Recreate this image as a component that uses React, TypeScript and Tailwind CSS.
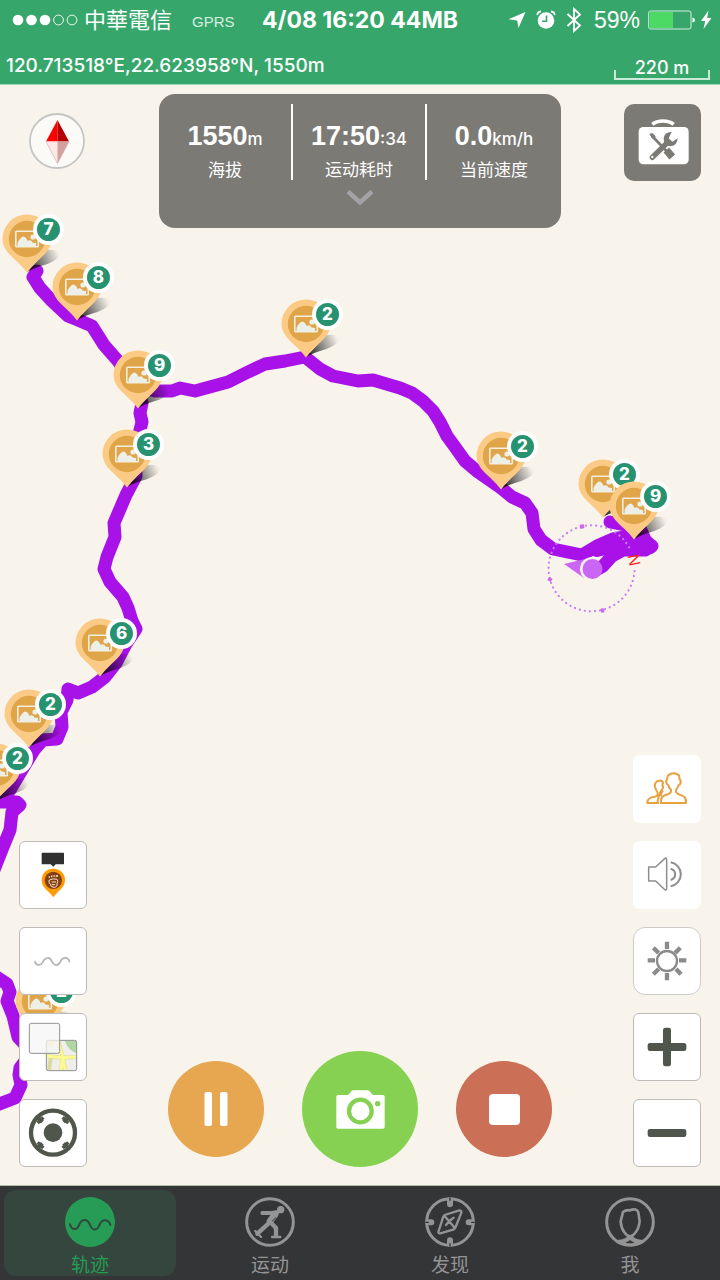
import React from 'react';

const sans = "font-['Liberation_Sans','Noto_Sans_CJK_SC',sans-serif]";
const inter = "font-['Inter','Noto_Sans_CJK_SC',sans-serif]";

type Pin = { x: number; y: number; count: number };

/* x / y is the tip of each pin on the map canvas */
const pins: Pin[] = [
  { x: 27, y: 187, count: 7 },
  { x: 77, y: 235, count: 8 },
  { x: 138, y: 323, count: 9 },
  { x: 306, y: 272, count: 2 },
  { x: 127, y: 402, count: 3 },
  { x: 501, y: 404, count: 2 },
  { x: 603, y: 432, count: 2 },
  { x: 634, y: 454, count: 9 },
  { x: 100, y: 591, count: 6 },
  { x: 29, y: 662, count: 2 },
  { x: -4, y: 716, count: 2 },
  { x: 40, y: 949, count: 2 },
];

function PhotoPin({ pin }: { pin: Pin }) {
  return (
    <button
      type="button"
      aria-label={`${pin.count} 张照片`}
      className="absolute h-[60px] w-[66px]"
      style={{ left: pin.x - 26, top: pin.y - 59 }}
    >
      <svg viewBox="0 0 66 60" className="h-[60px] w-[66px]" fill="none">
        <path d="M26 59L46 37Q60 36 59 42.500Q55 49 40 53Q31 56 26 59Z" fill="url(#pinShadow)" />
        <path
          d="M26 1.500A24.500 24.500 0 0 1 50.500 26C50.500 36 42 43 36 48.500Q30 54 26 59.500Q22 54 16 48.500C10 43 1.500 36 1.500 26A24.500 24.500 0 0 1 26 1.500Z"
          fill="#fbcb85"
        />
        <circle cx="26" cy="26" r="18.200" fill="#e0a449" />
        <rect x="14.800" y="18.300" width="22.500" height="15.400" rx="0.800" stroke="#f3efdf" strokeWidth="1.600" />
        <path d="M16.500 33V30Q18.500 25 22 23.500Q25 23.500 26.500 28Q29.500 26 31.500 29.500L35 30V33Z" fill="#edf0e9" />
        <circle cx="32" cy="24" r="2.600" fill="#edf0e9" />
      </svg>
      <span
        className={`absolute top-[1px] right-[3px] flex size-[31px] items-center justify-center rounded-full border-4 border-white bg-[#27926f] text-[17px] leading-none font-extrabold text-white ${inter}`}
      >
        {pin.count}
      </span>
    </button>
  );
}

function TrackMap() {
  return (
    <div className="absolute inset-0 overflow-hidden">
      <svg viewBox="0 85 720 1101" className="absolute top-0 left-0 h-[1101px] w-[720px]" fill="none" role="img" aria-label="轨迹地图">
        <defs>
          <linearGradient id="pinShadow" x1="28" y1="56" x2="58" y2="43" gradientUnits="userSpaceOnUse">
            <stop stopColor="#000" stopOpacity="0.85" />
            <stop offset="0.4" stopColor="#000" stopOpacity="0.5" />
            <stop offset="1" stopColor="#000" stopOpacity="0.02" />
          </linearGradient>
        </defs>
        <g stroke="#a812e8" strokeWidth="13" strokeLinecap="round" strokeLinejoin="round">
          <path d="M37 271L33 277L40 288L52 301L68 316L78 320L92 326L104 345L118 361L137 386L155 391L172 391L180 388L195 391L228 382L246 373L265 364L285 361L305 357L320 369L333 376L358 381L373 380L400 388L412 393L423 401L433 411L440 422L447 436L455 447L465 461L478 472L501 488L512 497L525 503L532 513L534 529L541 540L553 549L582 555L597 546L613 539L630 536L647 542L652 546L645 550L623 550L612 556L603 566L594 571" />
          <path d="M610 522L640 528L646 542" />
          <path d="M597 550L625 543L650 547" strokeWidth="14" />
          <path d="M137 386L142 403L140 413L142 422L139 434L136 455L136 476L126 495L114 523L115 537L107 557L104 569L110 582L123 597L128 608L132 621L136 629L126 644L116 663L105 677L92 687L78 693L68 689L67 700L61 712L62 727L57 739L43 740L34 750L20 773L10 790L0 802L17 802L20 805L12 812L10 830L3 847L-6 870" />
          <path d="M-8 974L7 984L10 992L7 1001L13 1016L18 1037L32 1052L20 1068L19 1075L21 1085L15 1098L-6 1106" />
        </g>
        <path d="M634.500 571A43 43 0 1 1 630 549" stroke="#c77df2" strokeWidth="2.200" strokeDasharray="0.100 5" strokeLinecap="round" />
        <path d="M580 527L584 526M549 581L551 578M601 611L604 610" stroke="#cf63f3" strokeWidth="4" />
        <path d="M564 564L585 559L584 578Z" fill="#cb65f5" />
        <circle cx="592" cy="569" r="12" fill="#f8f4ec" clipPath="inset(0 12px 0 0)" />
        <circle cx="592.500" cy="569" r="10" fill="#cb65f5" />
        <text x="634" y="560" transform="rotate(78 634 560)" textAnchor="middle" dominantBaseline="central" fill="#fb1d1d" fontSize="16" fontFamily="Liberation Sans, sans-serif">N</text>
      </svg>
      {pins.map((p) => (
        <PhotoPin key={`${p.x}-${p.y}`} pin={p} />
      ))}
    </div>
  );
}

function StatusBar() {
  return (
    <header className={`h-[85px] border-b border-[#9cd5b5] bg-[#37a66b] text-white ${sans}`}>
      <div className="grid h-10 grid-cols-[1fr_auto_1fr] items-center">
        <div className="flex items-center pl-3">
          <svg viewBox="0 0 66 12" className="h-3 w-[66px]" aria-label="信号">
            <g fill="#fff">
              <circle cx="6" cy="6" r="5.300" />
              <circle cx="19.500" cy="6" r="5.300" />
              <circle cx="33" cy="6" r="5.300" />
            </g>
            <g fill="none" stroke="#fff" strokeWidth="0.900">
              <circle cx="46.500" cy="6" r="4.900" />
              <circle cx="60" cy="6" r="4.900" />
            </g>
          </svg>
          <span className="mb-1 ml-1.5 font-['Noto_Sans_CJK_TC',sans-serif] text-[22px] leading-7">中華電信</span>
          <span className="mt-1 ml-5 text-[15px] text-[#d8efe2]">GPRS</span>
        </div>
        <div className={`text-[23px] leading-8 font-bold ${inter}`}>4/08 16:20 44MB</div>
        <div className="flex items-center justify-end pr-2">
          <svg viewBox="0 0 18 18" className="mr-2.5 size-[18px]" fill="#fff">
            <path d="M17.500 1L10.500 17L9.200 9.600L0.500 8.300Z" />
          </svg>
          <svg viewBox="0 0 20 20" className="mr-2.5 size-5">
            <circle cx="10" cy="10.500" r="8.300" fill="#fff" />
            <path d="M1.500 5Q1 2 5 1.500M18.500 5Q19 2 15 1.500" stroke="#fff" strokeWidth="1.800" fill="none" />
            <path d="M10.500 5.500V11.300H6" stroke="#37a66b" strokeWidth="1.600" fill="none" />
          </svg>
          <svg viewBox="0 0 16 26" className="mr-3 h-[26px] w-4" fill="none" stroke="#fff" strokeWidth="1.800">
            <path d="M1.500 7L14 18.500L8 24V2L14 7.500L1.500 19" />
          </svg>
          <span className="text-[23px] leading-8">59%</span>
          <svg viewBox="0 0 48 20" className="ml-2 h-5 w-12">
            <rect x="0.700" y="1" width="42.300" height="18" rx="2" fill="none" stroke="#d5eedf" strokeWidth="1" />
            <rect x="1.500" y="2" width="23.500" height="16" fill="#4cd964" />
            <path d="M44.500 7.500Q47 8 47 10Q47 12 44.500 12.500Z" fill="#fff" />
          </svg>
          <svg viewBox="0 0 12 20" className="ml-1 h-5 w-3" fill="#fff">
            <path d="M8.500 0.500L1 11H5.200L3.500 19L11.500 8H7.200Z" />
          </svg>
        </div>
      </div>
      <div className="flex items-start justify-between pr-2.5 pl-1.5">
        <p className={`mt-3 text-[19px] leading-7 font-medium ${inter}`}>120.713518°E,22.623958°N, 1550m</p>
        <div className="relative mt-4 w-24">
          <p className={`text-center text-[18px] leading-6 font-medium ${inter}`}>220 m</p>
          <div className="absolute bottom-0 h-2.5 w-full border-x-2 border-b-2 border-[#c8ead7]" />
        </div>
      </div>
    </header>
  );
}

const stats = [
  { value: '1550', unit: 'm', label: '海拔' },
  { value: '17:50', unit: ':34', label: '运动耗时' },
  { value: '0.0', unit: 'km/h', label: '当前速度' },
];

function StatsPanel() {
  return (
    <section className={`h-[134px] rounded-2xl bg-[#7b7a75] pt-2.5 text-white ${sans}`}>
      <dl className="grid grid-cols-3 divide-x-2 divide-white">
        {stats.map((s) => (
          <div key={s.label} className="flex h-[76px] flex-col-reverse items-center justify-end pt-4">
            <dt className="text-[17px] leading-7">{s.label}</dt>
            <dd className="mb-0.5 text-[27px] leading-8 font-bold">
              {s.value}
              <span className={`text-[17px] font-medium ${inter}`}>{s.unit}</span>
            </dd>
          </div>
        ))}
      </dl>
      <button type="button" aria-label="展开" className="mx-auto mt-2.5 block">
        <svg viewBox="0 0 28 16" className="h-4 w-7" fill="none" stroke="#a3a3a5" strokeWidth="4.500">
          <path d="M2 1.500L14 12.500L26 1.500" />
        </svg>
      </button>
    </section>
  );
}

type ToolProps = { label: string; frame: string; box: string; children: React.ReactNode };

function Tool({ label, frame, box, children }: ToolProps) {
  return (
    <button type="button" aria-label={label} className={`size-[68px] border bg-white ${frame}`}>
      <svg viewBox={box} className="size-full" fill="none">
        {children}
      </svg>
    </button>
  );
}

const framed = 'rounded-md border-[#bdbcb8]';
const plain = 'rounded-md border-white';

function LeftTools() {
  return (
    <div className="flex flex-col gap-[18px]">
      <Tool label="标记" frame={framed} box="60 154 198 198">
        <path d="M127 186H190Q192 186 192 188V219Q192 221 190 221H167L160 228L152 221H127Q125 221 125 219V188Q125 186 127 186Z" fill="#303030" />
        <path d="M160 234A34 34 0 0 1 195 269C195 293 171 302 160 320C149 302 125 293 125 269A34 34 0 0 1 160 234Z" fill="#ff9c05" />
        <circle cx="160" cy="269" r="26" fill="#84400f" />
        <path d="M148 268Q160 262 171 266Q176 272 171 279Q173 289 162 290Q152 290 151 281Q144 275 148 268ZM155 274H168M155 282H165" stroke="#f6e9de" strokeWidth="3" />
        <path d="M146 259H150M153 257H157M160 256H164M167 256H174" stroke="#f6e9de" strokeWidth="5" />
      </Tool>
      <Tool label="轨迹线" frame={framed} box="60 413 198 198">
        <path d="M105 514C108 525 121 528 128 516C134 502 149 496 156 514C164 528 175 528 181 514C189 498 205 500 208 514" stroke="#b4b4b4" strokeWidth="5" strokeLinecap="round" />
      </Tool>
      <Tool label="图层" frame={framed} box="60 672 198 198">
        <rect x="139" y="751" width="91" height="91" rx="6" fill="#efeeea" />
        <path d="M139 753H172L159 767L139 771Z" fill="#f7dfa7" />
        <path d="M194 752H229V788Q208 785 194 752Z" fill="#afd6a4" />
        <path d="M141 798Q182 805 228 801M174 753L188 801L183 840M188 801L196 840M147 840L153 800" stroke="#dadb9a" strokeWidth="12" />
        <path d="M141 798Q182 805 228 801M174 753L188 801L183 840M188 801L196 840" stroke="#fcf991" strokeWidth="9" />
        <rect x="139" y="751" width="91" height="91" rx="6" stroke="#8e8e8e" strokeWidth="3" />
        <rect x="88" y="700" width="91" height="90" rx="6" fill="#f5f5f5" fillOpacity="0.75" stroke="#929292" strokeWidth="3" />
      </Tool>
      <Tool label="定位" frame={framed} box="60 931 198 198">
        <circle cx="159" cy="1029" r="66" stroke="#50564c" strokeWidth="13" />
        <circle cx="159" cy="1029" r="28" fill="#50564c" />
        <g stroke="#50564c">
          <path d="M111 981L127 997M207 981L191 997M111 1077L127 1061M207 1077L191 1061" strokeWidth="12" />
          <path d="M113 1000L130 983M205 1000L188 983M113 1058L130 1075M205 1058L188 1075" strokeWidth="10" />
        </g>
      </Tool>
    </div>
  );
}

function RightTools() {
  return (
    <div className="flex flex-col gap-[18px]">
      <Tool label="队友" frame={plain} box="73 45 198 198">
        <g stroke="#e9a03f" strokeWidth="6" strokeLinejoin="round">
          <path d="M154 186H229Q231 166 212 162Q198 157 199 149Q198 145 204 139Q206 131 211 130Q216 119 210 115L208 103Q192 91 175 103L172 115Q167 120 172 129L176 133Q179 142 184 146Q186 156 174 160Q151 165 154 186Z" />
          <path d="M148 186H113Q112 174 126 169Q145 166 144 160Q145 153 140 148Q136 139 135 134Q138 119 148 119Q158 118 160 125L158 134Q163 136 157 146L151 155Q150 162 157 164M160 149L147 166L143 185" />
        </g>
      </Tool>
      <Tool label="声音" frame={plain} box="73 305 198 198">
        <g stroke="#8e8e8e" strokeWidth="4.500" strokeLinejoin="round">
          <path d="M117 380H138L165 355Q170 350 171 359V444Q170 452 164 447L138 422H117Z" />
          <path d="M183 385A17.500 17.500 0 0 1 183 419M183 366A36.500 36.500 0 0 1 183 438" strokeWidth="6" />
        </g>
      </Tool>
      <Tool label="亮度" frame="rounded-xl border-[#cdccc8]" box="73 563 198 198">
        <circle cx="172" cy="662" r="30" stroke="#8b8b8b" strokeWidth="7" />
        <path d="M172 604V626M172 698V720M114 660H136M208 660H230M131 622L147 638M212 622L196 638M131 702L147 686M214 702L199 686" stroke="#8b8b8b" strokeWidth="13" />
      </Tool>
      <Tool label="放大" frame={framed} box="73 821 198 198">
        <g fill="#50564c">
          <rect x="160" y="862" width="24" height="116" rx="7" />
          <rect x="114" y="908" width="116" height="24" rx="7" />
        </g>
      </Tool>
      <Tool label="缩小" frame={framed} box="73 1080 198 198">
        <rect x="114" y="1167" width="116" height="24" rx="7" fill="#50564c" />
      </Tool>
    </div>
  );
}

function RecordControls() {
  return (
    <div className="flex items-center gap-[38px]">
      <button type="button" aria-label="暂停" className="flex size-24 items-center justify-center rounded-full bg-[#e6a750]">
        <svg viewBox="0 0 24 34" className="h-[34px] w-6" fill="#fff">
          <rect x="0.500" width="7.500" height="34" rx="2" />
          <rect x="16" width="7.500" height="34" rx="2" />
        </svg>
      </button>
      <button type="button" aria-label="拍照" className="flex size-[116px] items-center justify-center rounded-full bg-[#86d151]">
        <svg viewBox="555 149 147 117" className="h-[39px] w-[49px]">
          <path d="M561 164H590Q597 160 600 154Q603 150 608 150H650Q655 150 658 155Q661 161 667 164H696Q701 164 701 169V260Q701 265 696 265H561Q556 265 556 260V169Q556 164 561 164Z" fill="#fff" />
          <circle cx="628" cy="212" r="34" fill="#fff" stroke="#86d151" strokeWidth="13" />
          <circle cx="680" cy="190" r="8" fill="#86d151" />
        </svg>
      </button>
      <button type="button" aria-label="停止" className="flex size-24 items-center justify-center rounded-full bg-[#cb7056]">
        <span className="size-[31px] rounded bg-white" />
      </button>
    </div>
  );
}

const tabs = [
  {
    label: '轨迹',
    box: '195 51 150 150',
    icon: (
      <>
        <circle cx="270" cy="126" r="75" fill="#279c56" />
        <path d="M210 133C213 148 228 153 236 138C243 117 260 113 269 132C276 153 291 154 299 134C307 114 327 119 331 135" stroke="#2f4a3b" strokeWidth="6" strokeLinecap="round" />
      </>
    ),
  },
  {
    label: '运动',
    box: '737 51 150 150',
    icon: (
      <>
        <circle cx="812" cy="126" r="70" stroke="#949494" strokeWidth="9" />
        <circle cx="844" cy="89" r="11" fill="#949494" />
        <g stroke="#949494" strokeLinecap="round" strokeLinejoin="round">
          <path d="M789 99H818L833 97" strokeWidth="12" />
          <path d="M828 102L812 124" strokeWidth="20" />
          <path d="M808 130L774 161M815 128L830 144V166" strokeWidth="13" />
          <path d="M768 153L785 171M818 171H843" strokeWidth="7" />
          <path d="M829 114L819 123" stroke="#343537" strokeWidth="3" />
        </g>
      </>
    ),
  },
  {
    label: '发现',
    box: '195 51 150 150',
    icon: (
      <g stroke="#949494" strokeLinecap="round" strokeLinejoin="round">
        <circle cx="270" cy="126" r="70" strokeWidth="9" />
        <path d="M270 60V73M270 181V192M204 127H214M326 127H336" strokeWidth="18" />
        <path d="M270 53V61M270 191V199M197 127H205M335 127H343" stroke="#343537" strokeWidth="4" />
        <path d="M254 105L298 91Q306 91 304 98L287 141Q284 147 279 149L241 160Q233 161 236 153L249 113Q251 107 254 105ZM253 107L284 143M268 123L281 113M268 123L258 135" strokeWidth="7" />
      </g>
    ),
  },
  {
    label: '我',
    box: '734 51 150 150',
    icon: (
      <g stroke="#949494" strokeLinejoin="round">
        <circle cx="809" cy="126" r="70" strokeWidth="9" />
        <path d="M788 96Q797 89 809 91Q829 83 834 97L838 124Q835 147 825 158Q817 169 809 169Q800 169 792 157Q782 143 781 124Z" strokeWidth="8" />
        <path d="M763 181Q792 180 801 170H818Q827 180 855 181L845 189Q828 198 809 198Q788 197 774 189Z" fill="#949494" strokeWidth="1" />
        <path d="M795 188Q804 185 809 180Q814 185 823 188Q809 192 795 188Z" fill="#343537" stroke="none" />
      </g>
    ),
  },
];

function TabBar() {
  return (
    <nav className={`grid h-[95px] grid-cols-4 border-t border-[#b1bfae] bg-[#343537] py-1 ${sans}`}>
      {tabs.map((t, i) => (
        <a
          key={t.label}
          href="#"
          aria-current={i === 0 ? 'page' : undefined}
          className={
            i === 0
              ? 'mx-1 flex flex-col items-center rounded-xl bg-[#34463d] pt-[7px] text-[#279c56]'
              : 'mx-1 flex flex-col items-center rounded-xl pt-[7px] text-[#949494]'
          }
        >
          <svg viewBox={t.box} className="size-[50px] shrink-0" fill="none">
            {t.icon}
          </svg>
          <span className="mt-2.5 text-[19px] leading-[18px]">{t.label}</span>
        </a>
      ))}
    </nav>
  );
}

export default function App() {
  return (
    <div className="flex min-h-screen flex-col bg-[#f8f4ec]">
      <StatusBar />
      <main className="relative flex flex-1 flex-col">
        <TrackMap />
        <div className="relative flex flex-1 flex-col justify-between">
          <div className="grid grid-cols-[1fr_402px_1fr] items-start pt-[9px]">
            <button type="button" aria-label="指南针" className="mt-[19px] ml-[29px] size-14">
              <svg viewBox="0 0 56 56" className="size-14">
                <circle cx="28" cy="28" r="27" fill="#fbfaf7" stroke="#c5c5c4" strokeWidth="1.800" />
                <path d="M28.500 7V28.500H17Z" fill="#fe0000" />
                <path d="M28.500 7L40 28.500H28.500Z" fill="#b40000" />
                <path d="M17 28.500H28.500V50.500Z" fill="#fde7e7" />
                <path d="M28.500 28.500H40L28.500 50.500Z" fill="#d39f9f" />
                <path d="M17 28.500L28.500 50.500L40 28.500" fill="none" stroke="#c9aaaa" strokeWidth="0.600" />
              </svg>
            </button>
            <StatsPanel />
            <button type="button" aria-label="工具箱" className="mt-2.5 mr-[19px] size-[77px] justify-self-end rounded-[10px] bg-[#7b7a75]">
              <svg viewBox="42 40 231 231" className="size-full" fill="none">
                <path d="M127 101Q139 91 159 91Q179 91 191 101" stroke="#fff" strokeWidth="11" />
                <rect x="86" y="109" width="150" height="112" rx="14" fill="#fff" />
                <path d="M126 136L184 196" stroke="#7b7a75" strokeWidth="8" />
                <path d="M118 130L127 127L137 137L133 145L126 143Z" fill="#7b7a75" />
                <path d="M169 178L187 199" stroke="#7b7a75" strokeWidth="22" />
                <path d="M127 200L171 157" stroke="#7b7a75" strokeWidth="16" strokeLinecap="round" />
                <path d="M185 124Q164 123 161 143Q160 165 182 167Q202 165 203 143L187 153L176 143Z" fill="#7b7a75" />
                <circle cx="127" cy="199" r="3.500" fill="#fff" />
              </svg>
            </button>
          </div>
          <div className="flex items-end justify-between px-[19px] pb-[18px]">
            <LeftTools />
            <RecordControls />
            <RightTools />
          </div>
        </div>
      </main>
      <TabBar />
    </div>
  );
}
